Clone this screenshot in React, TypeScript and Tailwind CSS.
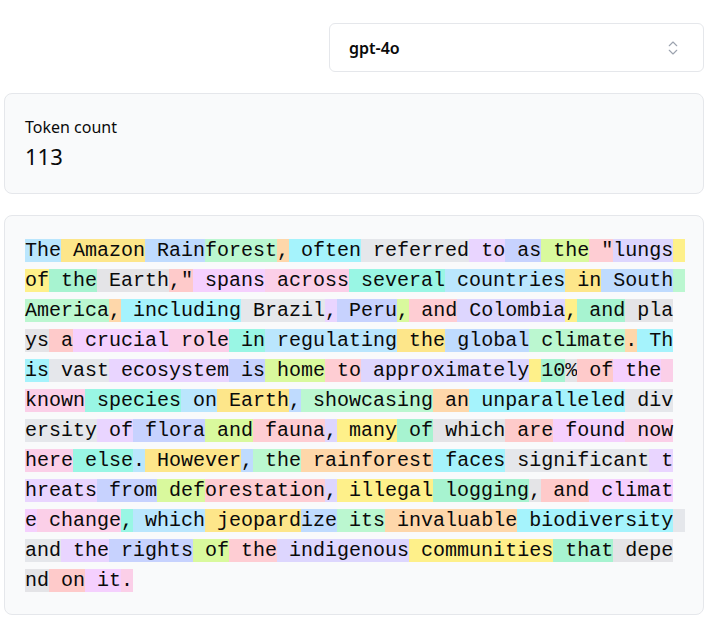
import React from "react";
import { ChevronsUpDown } from "lucide-react";

const COLORS = [
  "bg-[#bae6fd]",
  "bg-[#fde68a]",
  "bg-[#bfdbfe]",
  "bg-[#bbf7d0]",
  "bg-[#fed7aa]",
  "bg-[#a5f3fc]",
  "bg-[#e5e7eb]",
  "bg-[#e9d5ff]",
  "bg-[#c7d2fe]",
  "bg-[#d9f99d]",
  "bg-[#fecdd3]",
  "bg-[#ddd6fe]",
  "bg-[#fef08a]",
  "bg-[#a7f3d0]",
  "bg-[#e4e4e7]",
  "bg-[#fecaca]",
  "bg-[#f5d0fe]",
  "bg-[#fbcfe8]",
  "bg-[#99f6e4]",
];

const TOKENS: string[] = [
  "The", " Amazon", " Rain", "forest", ",", " often", " referred", " to", " as", " the", ' "', "lungs",
  " of", " the", " Earth", ',"', " spans", " across", " several", " countries", " in", " South", " America",
  ",", " including", " Brazil", ",", " Peru", ",", " and", " Colombia", ",", " and", " plays", " a",
  " crucial", " role", " in", " regulating", " the", " global", " climate", ".", " This", " vast",
  " ecosystem", " is", " home", " to", " approximately", " ", "10", "%", " of", " the", " known",
  " species", " on", " Earth", ",", " showcasing", " an", " unparalleled", " diversity", " of", " flora",
  " and", " fauna", ",", " many", " of", " which", " are", " found", " nowhere", " else", ".", " However",
  ",", " the", " rainforest", " faces", " significant", " threats", " from", " def", "orestation", ",",
  " illegal", " logging", ",", " and", " climate", " change", ",", " which", " jeopard", "ize", " its",
  " invaluable", " biodiversity", " and", " the", " rights", " of", " the", " indigenous", " communities",
  " that", " depend", " on", " it", ".",
];

export default function App() {
  return (
    <div className="min-h-screen bg-white font-['Noto_Sans',sans-serif] text-[#0a0a0a]">
      <div className="flex flex-col gap-[21px] pl-[4px] pr-[7px] pt-[23px]">
        <div className="flex justify-end">
          <div className="flex h-[49px] w-[375px] items-center justify-between rounded-md border border-[#e5e7eb] bg-white pl-[19px] pr-[21px]">
            <span className="text-[16px] font-semibold text-[#0a0a0a]">gpt-4o</span>
            <ChevronsUpDown size={18} strokeWidth={1.5} className="text-[#9ca3af]" />
          </div>
        </div>

        <div className="flex h-[101px] flex-col rounded-lg border border-[#e5e7eb] bg-[#f9fafb] px-5 pt-[21px]">
          <div className="text-[16px] leading-6">Token count</div>
          <div className="mt-[1px] text-[22px] leading-8">113</div>
        </div>

        <div className="h-[400px] rounded-lg border border-[#e5e7eb] bg-[#f9fafb] px-5 pt-[20px]">
          <pre className="whitespace-pre-wrap break-all font-['Liberation_Mono',monospace] text-[20px] leading-[30px] text-[#0a0a0a]">
            {TOKENS.map((t, i) => (
              <span key={i} className={COLORS[i % COLORS.length]}>
                {t}
              </span>
            ))}
          </pre>
        </div>
      </div>
    </div>
  );
}
